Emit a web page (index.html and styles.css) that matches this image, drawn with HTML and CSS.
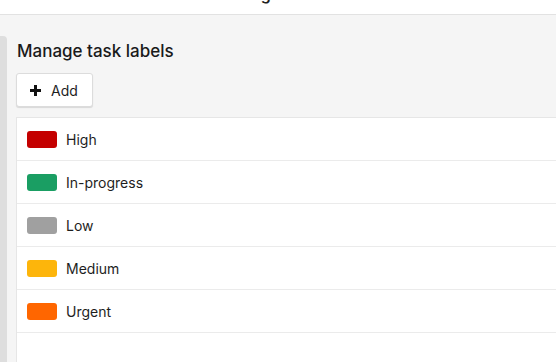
FILE: index.html
```html
<!DOCTYPE html>
<html>
<head>
<meta charset="utf-8">
<link rel="stylesheet" href="styles.css">
</head>
<body>
<header class="topbar"><span class="topbar-title">Settings</span></header>
<div class="main">
  <div class="edge"></div>
  <section class="content">
    <h1 class="title">Manage task labels</h1>
    <button class="add-btn" type="button">
      <svg class="plus" width="13" height="13" viewBox="0 0 13 13"><path d="M6.5 1v11M1 6.5h11" stroke="#111" stroke-width="3" stroke-linecap="butt"/></svg>
      <span>Add</span>
    </button>
    <ul class="labels">
      <li class="label-row"><span class="swatch" style="background:#c40000"></span><span class="name">High</span></li>
      <li class="label-row"><span class="swatch" style="background:#1a9e63"></span><span class="name">In-progress</span></li>
      <li class="label-row"><span class="swatch" style="background:#a0a0a0"></span><span class="name">Low</span></li>
      <li class="label-row"><span class="swatch" style="background:#fdb50b"></span><span class="name">Medium</span></li>
      <li class="label-row"><span class="swatch" style="background:#ff6600"></span><span class="name">Urgent</span></li>
    </ul>
  </section>
</div>
</body>
</html>
```
FILE: styles.css
```css
* { box-sizing: border-box; }
html, body { margin: 0; padding: 0; height: 100%; overflow: hidden; }
body {
  font-family: Inter, "Liberation Sans", sans-serif;
  color: #1e1e1e;
  background: #f5f5f5;
  display: flex;
  flex-direction: column;
}
.topbar {
  height: 15px;
  background: #fff;
  border-bottom: 1px solid #e2e2e2;
  overflow: hidden;
  padding-left: 216px;
  flex: none;
}
.topbar-title {
  display: block;
  font-size: 16px;
  font-weight: 600;
  line-height: 20px;
  margin-top: -16px;
}
.main {
  flex: 1;
  display: flex;
  background: #f5f5f5;
}
.edge {
  width: 7px;
  margin-top: 21px;
  background: #dedede;
  border-top-right-radius: 4px;
  flex: none;
}
.content {
  flex: 1;
  padding-left: 9px;
  display: flex;
  flex-direction: column;
}
.title {
  margin: 26px 0 0 1px;
  font-size: 17px;
  font-weight: 500;
  line-height: 20px;
  color: #1a1a1a;
}
.add-btn {
  margin-top: 12px;
  align-self: flex-start;
  width: 77px;
  height: 34px;
  display: flex;
  align-items: center;
  gap: 9px;
  padding: 0 0 0 12px;
  background: #fff;
  border: 1px solid #dcdcdc;
  border-radius: 3px;
  box-shadow: 0 1px 1px rgba(0,0,0,0.12);
  font-family: inherit;
  font-size: 14px;
  color: #1e1e1e;
}
.plus { display: block; }
.labels {
  list-style: none;
  margin: 10px 0 0 0;
  padding: 0;
  flex: 1;
  background: #fff;
  border-top: 1px solid #e6e6e6;
  border-left: 1px solid #e6e6e6;
}
.label-row {
  height: 43px;
  display: flex;
  align-items: center;
  padding-left: 10px;
  border-bottom: 1px solid #ebebeb;
  font-size: 14px;
}
.swatch {
  width: 30px;
  height: 17px;
  border-radius: 3px;
  margin-right: 9px;
  flex: none;
}
.name { line-height: 17px; }
```
